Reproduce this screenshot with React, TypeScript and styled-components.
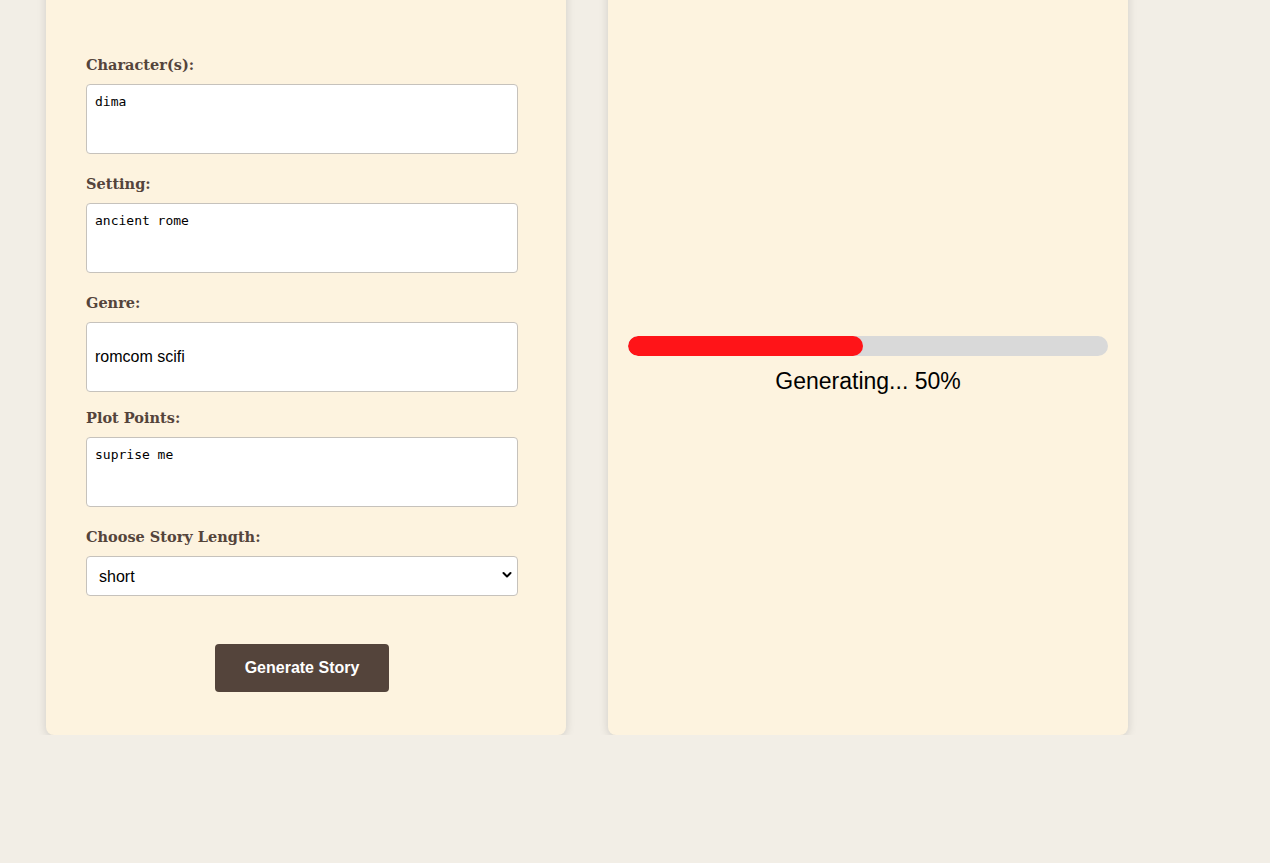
import React from "react";
import styled, { createGlobalStyle } from "styled-components";

const Global = createGlobalStyle`
  html, body { margin: 0; padding: 0; background: #f2eee6; }
  body { font-family: "Liberation Sans", Arial, sans-serif; overflow: hidden; }
  * { box-sizing: border-box; }
`;

const Page = styled.div`
  display: flex;
  gap: 42px;
  padding-left: 46px;
  margin-top: -20px;
  align-items: stretch;
`;

const Card = styled.div`
  width: 520px;
  height: 755px;
  background: #fdf3df;
  border-radius: 8px;
  box-shadow: 0 2px 10px rgba(0, 0, 0, 0.14);
`;

const FormCard = styled(Card)`
  padding: 74px 48px 0 40px;
`;

const OutputCard = styled(Card)`
  padding: 14px 20px 0;
  display: flex;
  flex-direction: column;
  justify-content: center;
  align-items: stretch;
`;

const Label = styled.label`
  display: block;
  font-family: Georgia, "DejaVu Serif", serif;
  font-weight: bold;
  font-size: 14.5px;
  line-height: 20px;
  color: #54443b;
  padding-top: 1px;
  margin-bottom: 9px;
`;

const TextArea = styled.textarea`
  display: block;
  width: 432px;
  height: 70px;
  padding: 9px 8px;
  border: 1px solid #c6c2bc;
  border-radius: 4px;
  background: #fff;
  font-family: "DejaVu Sans Mono", monospace;
  font-size: 13px;
  line-height: 16px;
  color: #000;
  resize: none;
  margin: 0 0 19px 0;
  outline: none;
`;

const TextInput = styled.input`
  display: block;
  width: 432px;
  height: 70px;
  padding: 0 8px;
  border: 1px solid #c6c2bc;
  border-radius: 4px;
  background: #fff;
  font-family: "Liberation Sans", Arial, sans-serif;
  font-size: 16px;
  color: #000;
  margin: 0 0 15px 0;
  outline: none;
`;

const SelectWrap = styled.div`
  position: relative;
  width: 432px;
  height: 40px;
`;

const Select = styled.select`
  appearance: none;
  -webkit-appearance: none;
  width: 100%;
  height: 40px;
  padding: 0 12px;
  border: 1px solid #c6c2bc;
  border-radius: 4px;
  background: #fff;
  font-family: "Liberation Sans", Arial, sans-serif;
  font-size: 16px;
  color: #000;
  outline: none;
`;

const Chevron = styled.svg`
  position: absolute;
  right: 6px;
  top: 15px;
  pointer-events: none;
`;

const ButtonRow = styled.div`
  width: 432px;
  display: flex;
  justify-content: center;
  margin-top: 48px;
`;

const Button = styled.button`
  width: 174px;
  height: 48px;
  border: none;
  border-radius: 4px;
  background: #54443b;
  color: #fff;
  font-family: "Liberation Sans", Arial, sans-serif;
  font-weight: bold;
  font-size: 16px;
  cursor: pointer;
`;

const Track = styled.div`
  width: 100%;
  height: 20px;
  border-radius: 10px;
  background: #d9d9d9;
  overflow: hidden;
`;

const Fill = styled.div`
  height: 100%;
  background: #ff1418;
  border-radius: 10px;
`;

const Status = styled.div`
  margin-top: 12px;
  text-align: center;
  font-family: "Liberation Sans", Arial, sans-serif;
  font-size: 23px;
  line-height: 26px;
  color: #000;
`;

export default function App() {
  const progress = 50;
  return (
    <>
      <Global />
      <Page>
        <FormCard>
          <Label>Character(s):</Label>
          <TextArea defaultValue="dima" spellCheck={false} />
          <Label>Setting:</Label>
          <TextArea defaultValue="ancient rome" spellCheck={false} />
          <Label>Genre:</Label>
          <TextInput defaultValue="romcom scifi" />
          <Label>Plot Points:</Label>
          <TextArea defaultValue="suprise me" spellCheck={false} />
          <Label>Choose Story Length:</Label>
          <SelectWrap>
            <Select defaultValue="short">
              <option value="short">short</option>
              <option value="medium">medium</option>
              <option value="long">long</option>
            </Select>
            <Chevron width="10" height="8" viewBox="0 0 10 8">
              <path d="M1.5 2 L5 5.5 L8.5 2" fill="none" stroke="#000" strokeWidth="2" strokeLinecap="round" strokeLinejoin="round" />
            </Chevron>
          </SelectWrap>
          <ButtonRow>
            <Button>Generate Story</Button>
          </ButtonRow>
        </FormCard>
        <OutputCard>
          <Track>
            <Fill style={{ width: `${(progress / 100) * 470}px` }} />
          </Track>
          <Status>Generating... {progress}%</Status>
        </OutputCard>
      </Page>
    </>
  );
}
